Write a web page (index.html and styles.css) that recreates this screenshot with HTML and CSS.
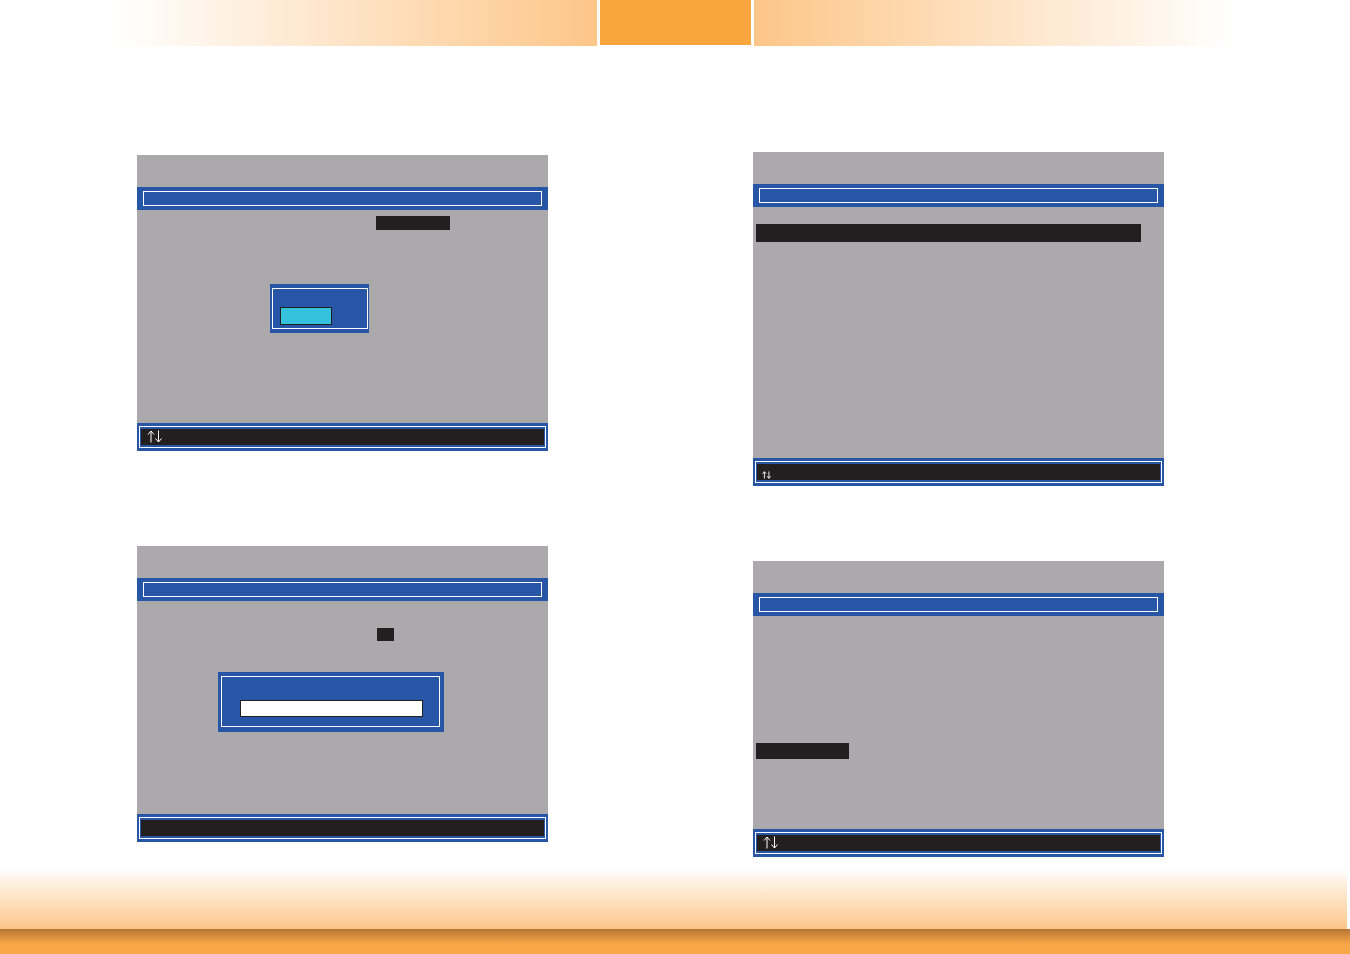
FILE: index.html
```html
<!DOCTYPE html>
<html lang="en">

<head>
    <meta charset="UTF-8">
    <meta name="viewport" content="width=device-width, initial-scale=1.0">
    <title>BIOS Setup</title>
    <link rel="stylesheet" href="styles.css">
</head>

<body>
    <header class="page-header">
        <div class="fade fade-left"></div>
        <div class="chapter-tab"></div>
        <div class="fade fade-right"></div>
    </header>

    <main class="screens">
        <div class="column column-left">
            <section class="screen">
                <div class="screen-head"></div>
                <div class="title-bar"><div class="title-frame"></div></div>
                <div class="screen-body">
                    <div class="selected selected-value"></div>
                    <div class="popup popup-options">
                        <div class="popup-frame">
                            <button class="option" type="button" aria-label="Option"></button>
                        </div>
                    </div>
                </div>
                <div class="help-bar">
                    <div class="help-frame">
                        <div class="keys">
                            <svg class="arrows" viewBox="0 0 15 13">
                                <path d="M4 12.5V1M1 4.5L4 1l3 3.5M11.500 .5V12M8.500 8.500l3 3.500 3-3.500" />
                            </svg>
                        </div>
                    </div>
                </div>
            </section>

            <section class="screen">
                <div class="screen-head"></div>
                <div class="title-bar"><div class="title-frame"></div></div>
                <div class="screen-body body-entry">
                    <div class="selected selected-number"></div>
                    <div class="popup popup-entry">
                        <div class="popup-frame">
                            <input class="entry" type="text" aria-label="Value">
                        </div>
                    </div>
                </div>
                <div class="help-bar">
                    <div class="help-frame">
                        <div class="keys"></div>
                    </div>
                </div>
            </section>
        </div>

        <div class="column column-right">
            <section class="screen">
                <div class="screen-head"></div>
                <div class="title-bar"><div class="title-frame"></div></div>
                <div class="screen-body body-tall">
                    <div class="selected selected-row"></div>
                </div>
                <div class="help-bar">
                    <div class="help-frame">
                        <div class="keys keys-small">
                            <svg class="arrows arrows-small" viewBox="0 0 15 13">
                                <path d="M4 12.5V1M1 4.5L4 1l3 3.5M11.500 .5V12M8.500 8.500l3 3.500 3-3.500" />
                            </svg>
                        </div>
                    </div>
                </div>
            </section>

            <section class="screen">
                <div class="screen-head"></div>
                <div class="title-bar"><div class="title-frame"></div></div>
                <div class="screen-body body-list">
                    <div class="selected selected-item"></div>
                </div>
                <div class="help-bar">
                    <div class="help-frame">
                        <div class="keys">
                            <svg class="arrows" viewBox="0 0 15 13">
                                <path d="M4 12.5V1M1 4.5L4 1l3 3.5M11.500 .5V12M8.500 8.500l3 3.500 3-3.500" />
                            </svg>
                        </div>
                    </div>
                </div>
            </section>
        </div>
    </main>

    <footer class="page-footer">
        <div class="footer-fade"></div>
        <div class="footer-bar"></div>
    </footer>
</body>

</html>
```

FILE: styles.css
```css
:root {
    --orange: #f9a63f;
    --peach: #fdc689;
    --grey: #aba9ab;
    --blue: #2656a5;
    --black: #231f20;
    --cyan: #35c2df;
}

* {
    box-sizing: border-box;
}

body {
    display: flex;
    flex-direction: column;
    min-height: 100vh;
    margin: 0;
    background: #fff;
    font-family: "Liberation Sans", Arial, sans-serif;
}

/* top band */
.page-header {
    display: flex;
    align-items: flex-start;
    gap: 3px;
}

.fade {
    flex: 1;
    height: 46px;
}

.fade-left {
    background: linear-gradient(to right, #fff 19%, var(--peach));
}

.fade-right {
    background: linear-gradient(to left, #fff 19%, var(--peach));
}

.chapter-tab {
    width: 151px;
    height: 45px;
    background: var(--orange);
}

.screens {
    display: grid;
    grid-template-columns: 1fr 1fr;
    gap: 205px;
    padding: 0 186px 0 137px;
}

.column {
    display: flex;
    flex-direction: column;
}

.column-left {
    gap: 95px;
    padding-top: 109px;
}

.column-right {
    gap: 75px;
    padding-top: 106px;
}

/* setup screen */
.screen {
    background: var(--grey);
}

.screen-head {
    height: 32px;
}

.title-bar {
    padding: 4px 6px;
    background: var(--blue);
}

.title-frame {
    height: 15px;
    border: 1px solid #fff;
}

.screen-body {
    position: relative;
    min-height: 213px;
    padding: 6px 3px;
}

.body-tall {
    min-height: 251px;
    padding-top: 17px;
}

.body-entry {
    padding-top: 27px;
}

.body-list {
    padding-top: 127px;
}

.selected {
    height: 16px;
    background: var(--black);
}

.selected-value {
    width: 74px;
    height: 14px;
    margin-left: 236px;
}

.selected-number {
    width: 17px;
    height: 13px;
    margin-left: 237px;
}

.selected-row {
    height: 18px;
    margin-right: 20px;
}

.selected-item {
    width: 93px;
}

/* popups sit over the screen body */
.popup {
    position: absolute;
    background: var(--blue);
}

.popup-frame {
    border: 1px solid #fff;
}

.popup-options {
    top: 74px;
    left: 133px;
    width: 99px;
    padding: 4px 1px 4px 2px;
}

.popup-options .popup-frame {
    padding: 18px 7px 3px;
}

.popup-entry {
    top: 71px;
    left: 81px;
    width: 226px;
    padding: 4px 4px 5px 3px;
}

.popup-entry .popup-frame {
    padding: 23px 16px 9px 18px;
}

.option {
    display: block;
    width: 52px;
    height: 18px;
    padding: 0;
    border: 1px solid var(--black);
    background: var(--cyan);
}

.entry {
    display: block;
    width: 100%;
    height: 17px;
    padding: 0 4px;
    border: 1px solid var(--black);
    background: #fff;
    font: 12px "Liberation Sans", Arial, sans-serif;
}

.help-bar {
    padding: 3px 2px;
    background: var(--blue);
}

.help-frame {
    padding: 2px 1px;
    border: 1px solid #fff;
}

.keys {
    display: flex;
    height: 16px;
    padding: 1px 6px;
    background: var(--black);
}

.keys-small {
    align-items: flex-end;
    padding: 1px 5px;
}

.arrows {
    width: 15px;
    height: 13px;
    fill: none;
    stroke: #fff;
    stroke-width: 1;
}

.arrows-small {
    width: 9px;
    height: 8px;
    stroke-width: 1.5;
}

/* bottom band */
.page-footer {
    margin-top: auto;
}

.footer-fade {
    height: 61px;
    margin-right: 3px;
    background: linear-gradient(#fff, var(--peach));
}

.footer-bar {
    height: 25px;
    background: linear-gradient(#b57633, #f9a648 60%);
}
```
